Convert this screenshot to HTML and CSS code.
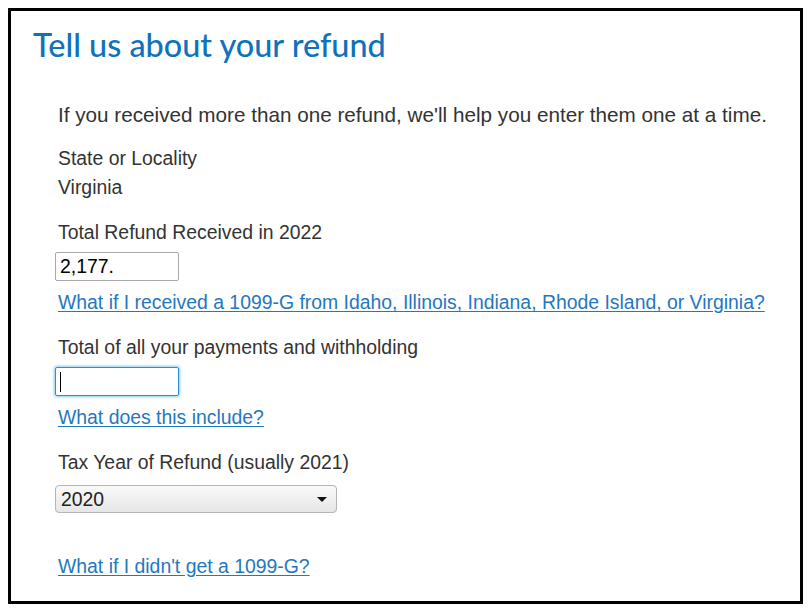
FILE: index.html
```html
<!DOCTYPE html>
<html>
<head>
<meta charset="utf-8">
<link rel="stylesheet" href="styles.css">
</head>
<body>
<div class="frame">
  <h1 class="title">Tell us about your refund</h1>
  <div class="content">
    <p class="intro">If you received more than one refund, we'll help you enter them one at a time.</p>
    <div class="field state">
      <div class="label">State or Locality</div>
      <div class="value">Virginia</div>
    </div>
    <div class="field">
      <div class="label">Total Refund Received in 2022</div>
      <input class="textbox" type="text" value="2,177.">
      <a class="link" href="#">What if I received a 1099-G from Idaho, Illinois, Indiana, Rhode Island, or Virginia?</a>
    </div>
    <div class="field">
      <div class="label">Total of all your payments and withholding</div>
      <div class="textbox focused"><span class="caret"></span></div>
      <a class="link" href="#">What does this include?</a>
    </div>
    <div class="field">
      <div class="label">Tax Year of Refund (usually 2021)</div>
      <div class="select"><span>2020</span><span class="arrow"></span></div>
    </div>
    <a class="link last" href="#">What if I didn't get a 1099-G?</a>
  </div>
</div>
</body>
</html>
```
FILE: styles.css
```css
html, body {
  margin: 0;
  padding: 0;
  background: #fff;
}
body {
  padding: 8px;
  font-family: "Liberation Sans", Arial, sans-serif;
  color: #333;
}
.frame {
  width: 795px;
  height: 596px;
  box-sizing: border-box;
  border: 3px solid #000;
  padding: 16px 22px 0 22px;
}
.title {
  margin: 0;
  font-family: Lato, "Open Sans", sans-serif;
  font-weight: 500;
  font-size: 32.4px;
  line-height: 36px;
  color: #0f72ba;
}
.content {
  padding-left: 25px;
  margin-top: 40px;
  font-size: 19.4px;
  line-height: 24px;
}
.intro {
  margin: 0;
  font-size: 20.7px;
  white-space: nowrap;
}
.field {
  display: flex;
  flex-direction: column;
  align-items: flex-start;
  margin-top: 21px;
}
.state {
  margin-top: 19px;
}
.value {
  margin-top: 5px;
}
.textbox {
  margin: 8px 0 0 -3px;
  width: 124px;
  height: 29px;
  box-sizing: border-box;
  border: 1px solid #a9a9a9;
  border-radius: 2px;
  padding: 0 4px;
  font-family: "Liberation Sans", Arial, sans-serif;
  font-size: 19.4px;
  color: #000;
  outline: none;
}
.focused {
  border: 1px solid #2a8fd4;
  box-shadow: 0 0 3px 1px #8cc8ee;
  display: flex;
  align-items: center;
}
.caret {
  display: block;
  width: 1px;
  height: 20px;
  background: #000;
}
.link {
  display: block;
  margin-top: 9px;
  color: #1f78c0;
  text-decoration: underline;
  text-underline-offset: 2px;
  white-space: nowrap;
}
.select {
  margin: 11px 0 0 -3px;
  width: 282px;
  height: 28px;
  box-sizing: border-box;
  border: 1px solid #b5b5b5;
  border-radius: 4px;
  background: linear-gradient(#fafafa, #e6e6e6);
  display: flex;
  align-items: center;
  justify-content: space-between;
  padding: 0 9px 0 5px;
  color: #222;
}
.arrow {
  width: 0;
  height: 0;
  border-left: 5px solid transparent;
  border-right: 5px solid transparent;
  border-top: 5px solid #111;
}
.last {
  margin-top: 41px;
}
```
